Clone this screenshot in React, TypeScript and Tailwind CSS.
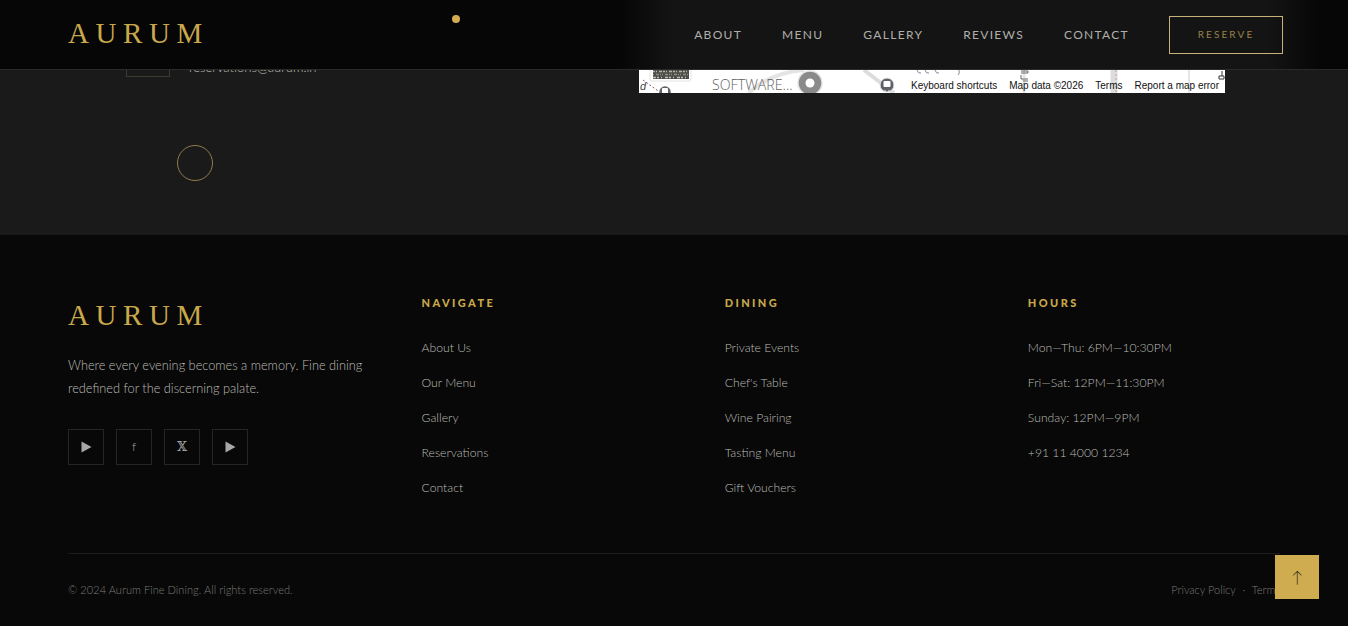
import React from 'react';

const navLinks = ['ABOUT', 'MENU', 'GALLERY', 'REVIEWS', 'CONTACT'];
const navigate = ['About Us', 'Our Menu', 'Gallery', 'Reservations', 'Contact'];
const dining = ['Private Events', "Chef's Table", 'Wine Pairing', 'Tasting Menu', 'Gift Vouchers'];
const hours = ['Mon—Thu: 6PM—10:30PM', 'Fri—Sat: 12PM—11:30PM', 'Sunday: 12PM—9PM', '+91 11 4000 1234'];

const Logo = () => (
    <div className="font-['Liberation_Serif',serif] text-[29px] leading-[36px] tracking-[6.6px] text-[#c9a84c]">AURUM</div>
);

const Play = () => (
    <svg width="11" height="12" viewBox="0 0 11 12"><path d="M0.5 0.5L10.5 6L0.5 11.5Z" fill="#a8a8a8" /></svg>
);

const FooterColumn = ({ title, items }: { title: string; items: string[] }) => (
    <div>
        <h4 className="text-[11px] leading-[16px] font-black tracking-[2.4px] text-[#c9a84c]">{title}</h4>
        <ul className="mt-[26px] flex flex-col gap-[14px]">
            {items.map((item) => (
                <li key={item} className="text-[12.2px] leading-[21px] font-light text-[#bcbcb6]">{item}</li>
            ))}
        </ul>
    </div>
);

const MapBox = () => (
    <div className="relative ml-[auto] mr-[123px] h-[60px] w-[586px] overflow-hidden bg-white">
        <svg className="absolute inset-0" width="586" height="60" viewBox="0 0 586 60" fill="none">
            <path d="M110 60Q130 40 165 37" stroke="#e4e4e4" strokeWidth="4" />
            <path d="M225 37L255 60" stroke="#dcdcdc" strokeWidth="4" />
            <path d="M385 37V60" stroke="#e6e6e6" strokeWidth="3" />
            <path d="M475 37V60" stroke="#dddddd" strokeWidth="7" />
            <path d="M477 37V60" stroke="#c9a0a0" strokeWidth="1" strokeDasharray="2 2" />
            <path d="M550 37V60" stroke="#e6e6e6" strokeWidth="2" />
            <path d="M278 37q1 4 4 3M286 37q1 4 4 3M296 37q1 4 4 3M320 37q1 4 -1 5" stroke="#7f8aa0" strokeWidth="1" />
            <path d="M382 38h7v2h-7M382 42v4h7M384 48h5" stroke="#666666" strokeWidth="1" />
            <path d="M583 38v5M580 43h5v3h-5z" stroke="#333333" strokeWidth="1" />
            <rect x="11" y="20" width="41" height="28" rx="2" fill="#ffffff" stroke="#e2e2e2" />
            <rect x="14" y="24" width="36" height="22" fill="#4d4d48" />
            <path d="M14 38.500h36" stroke="#b5b5ad" strokeWidth="1.500" strokeDasharray="2 1 1 2 3 1" />
            <path d="M14 41.500h36" stroke="#8f8f88" strokeWidth="1.500" strokeDasharray="1 2 3 1 1 1" />
            <path d="M14 44.500h36" stroke="#c2c2ba" strokeWidth="1.500" strokeDasharray="3 1 2 2 1 3" />
            <path d="M4 47L22 60" stroke="#8a5a5a" strokeWidth="1" strokeDasharray="2 2" />
            <circle cx="171" cy="50" r="12" fill="#8a8a8a" stroke="#e4e4e4" strokeWidth="1.5" />
            <circle cx="171" cy="50" r="4.5" fill="#ffffff" />
            <circle cx="26" cy="59" r="6.5" fill="#5f6368" stroke="#ffffff" strokeWidth="1.5" />
            <rect x="23" y="55" width="6" height="6" rx="1" fill="#ffffff" />
            <circle cx="248" cy="52" r="7" fill="#5f6368" stroke="#e8e8e8" strokeWidth="1" />
            <rect x="244.500" y="48" width="7" height="6" rx="1" fill="#ffffff" />
            <path d="M245.500 57.500h1M249.500 57.500h1" stroke="#ffffff" />
        </svg>
        <span className="absolute bottom-0 left-[73px] font-['Open_Sans',sans-serif] text-[14.2px] leading-[17px] font-light text-[#5f5f5f]">SOFTWARE...</span>
        <span className="absolute left-[1px] bottom-[1px] font-['Liberation_Sans',sans-serif] text-[11px] leading-[12px] italic text-[#444]">d</span>
        <div className="absolute right-0 bottom-0 flex gap-[12px] pr-[6px] pl-[6px] font-['Liberation_Sans',sans-serif] text-[10px] leading-[15px] text-[#111]">
            <span>Keyboard shortcuts</span>
            <span>Map data ©2026</span>
            <span>Terms</span>
            <span>Report a map error</span>
        </div>
    </div>
);

const App: React.FC = () => {
    return (
        <div className="relative h-[626px] w-full overflow-hidden bg-[#080808] font-['Lato',sans-serif]">
            <header className="absolute top-0 left-0 z-10 flex h-[70px] w-full items-center justify-between border-b border-[#2a2a28] bg-[linear-gradient(90deg,#060606_0%,#060606_46%,#141414_50%,#141414_94%,#060606_98%)] pr-[65px] pl-[68px]">
                <div className="mb-[3px]"><Logo /></div>
                <nav className="flex items-center gap-[40px]">
                    {navLinks.map((link) => (
                        <a key={link} className="text-[12px] leading-[16px] tracking-[1.3px] text-[#b0b0ab]">{link}</a>
                    ))}
                    <button className="flex h-[38px] w-[114px] items-center justify-center border border-[#c8b27a] text-[10px] tracking-[2.1px] text-[#97824a]">RESERVE</button>
                </nav>
            </header>

            <div className="absolute top-[15px] left-[452px] z-20 h-[8px] w-[8px] rounded-full bg-[#d4ab50]" />
            <div className="absolute top-[145px] left-[177px] z-20 h-[36px] w-[36px] rounded-full border-[1.5px] border-[#8f7d4c]" />

            <section className="flex h-[235px] items-end bg-[#1a1a1a] pb-[142px]">
                <div className="flex h-[60px] w-full items-end">
                    <div className="mb-[16px] ml-[126px] flex items-end gap-[19px]">
                        <div className="h-[44px] w-[44px] border border-[#3c3a32]" />
                        <span className="text-[13px] leading-[20px] font-light text-[#c4c4be]">reservations@aurum.in</span>
                    </div>
                    <MapBox />
                </div>
            </section>

            <footer className="bg-[#080808] px-[68px] pt-[60px]">
                <div className="grid grid-cols-[1.2fr_1fr_1fr_1fr] gap-x-[51px]">
                    <div>
                        <div className="mt-[2px]"><Logo /></div>
                        <p className="mt-[21px] text-[12.75px] leading-[23px] font-light text-[#bcbcb6]">Where every evening becomes a memory. Fine dining redefined for the discerning palate.</p>
                        <div className="mt-[29px] flex gap-[12px] text-[#a8a8a8]">
                            <a className="flex h-[36px] w-[36px] items-center justify-center border border-[#252523]"><Play /></a>
                            <a className="flex h-[36px] w-[36px] items-center justify-center border border-[#252523] text-[12px] font-light">f</a>
                            <a className="flex h-[36px] w-[36px] items-center justify-center border border-[#252523] font-['DejaVu_Serif',serif] text-[13px]">𝕏</a>
                            <a className="flex h-[36px] w-[36px] items-center justify-center border border-[#252523]"><Play /></a>
                        </div>
                    </div>
                    <FooterColumn title="NAVIGATE" items={navigate} />
                    <FooterColumn title="DINING" items={dining} />
                    <FooterColumn title="HOURS" items={hours} />
                </div>
                <div className="mt-[55px] flex items-center justify-between border-t border-[#1c1c1a] pt-[28px] text-[11px] leading-[16px] font-light text-[#7a7a76]">
                    <span className="tracking-[0.05px]">© 2024 Aurum Fine Dining. All rights reserved.</span>
                    <span>Privacy Policy <span className="mx-[4px]">·</span> Terms</span>
                </div>
            </footer>

            <button className="absolute top-[555px] left-[1275px] z-20 flex h-[44px] w-[44px] items-center justify-center bg-[#cfac50] text-[16px] font-light text-[#2a2a10]">↑</button>
        </div>
    );
};

export default App;
